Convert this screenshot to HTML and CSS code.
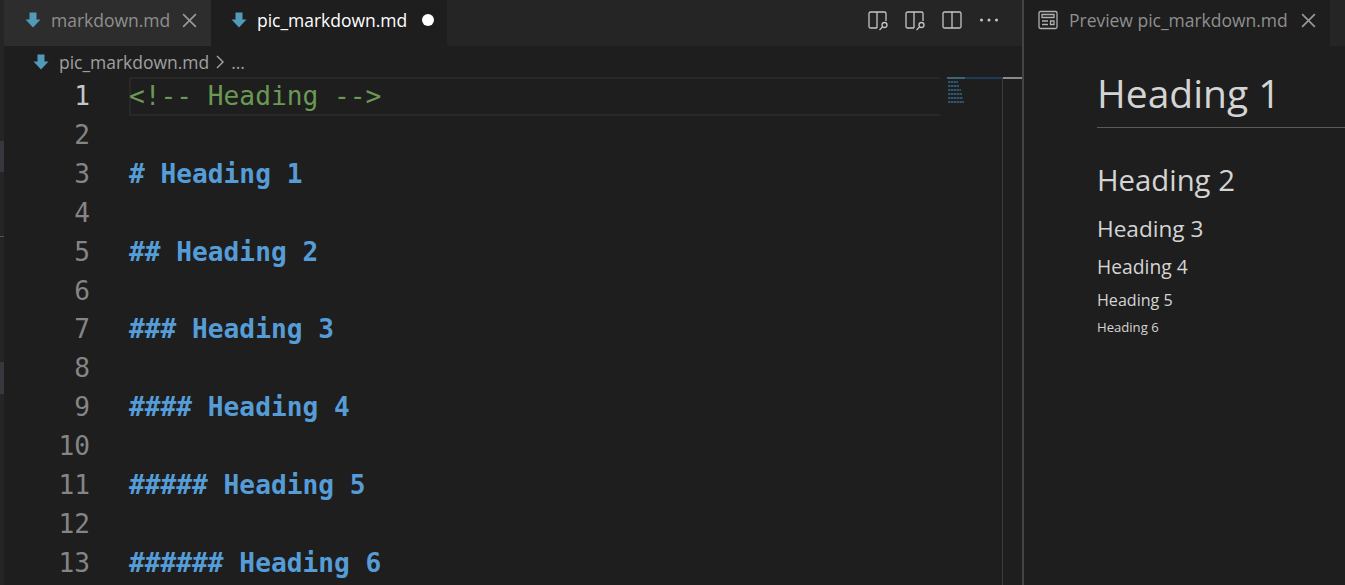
FILE: index.html
```html
<!DOCTYPE html>
<html lang="en">
<head>
<meta charset="utf-8">
<title>pic_markdown.md</title>
<link rel="stylesheet" href="styles.css">
</head>
<body>
<div class="window">
  <div class="strip"><i class="strip-a"></i><i class="strip-b"></i><i class="strip-c"></i></div>
  <main class="group">
    <div class="tabbar">
      <div class="tab tab-inactive">
        <svg class="md-icon" viewBox="0 0 16 16"><path d="M4.500.5h7v7h4L8 15.500.5 7.500h4z"/></svg>
        <span class="tab-name">markdown.md</span>
        <svg class="close" viewBox="0 0 16 16"><path d="M2 2l12 12M14 2L2 14"/></svg>
      </div>
      <div class="tab tab-active">
        <svg class="md-icon" viewBox="0 0 16 16"><path d="M4.500.5h7v7h4L8 15.500.5 7.500h4z"/></svg>
        <span class="tab-name">pic_markdown.md</span>
        <span class="dirty"></span>
      </div>
      <div class="actions">
        <svg class="action" viewBox="0 0 22 22"><path d="M10 19H3.500a1.500 1.500 0 0 1-1.500-1.500v-13A1.500 1.500 0 0 1 3.500 3h14A1.500 1.500 0 0 1 19 4.500V12M10 3v16"/><circle cx="17.500" cy="16" r="2.500"/><path d="M15.500 18l-3 3"/></svg>
        <svg class="action" viewBox="0 0 22 22"><path d="M10 19H3.500a1.500 1.500 0 0 1-1.500-1.500v-13A1.500 1.500 0 0 1 3.500 3h14A1.500 1.500 0 0 1 19 4.500V12M10 3v16"/><circle cx="17.500" cy="16" r="2.500"/><path d="M15.500 18l-3 3"/></svg>
        <svg class="action" viewBox="0 0 22 22"><path d="M3.500 3h15A1.500 1.500 0 0 1 20 4.500v13a1.500 1.500 0 0 1-1.500 1.500h-15A1.500 1.500 0 0 1 2 17.500v-13A1.500 1.500 0 0 1 3.500 3zM11 3v16"/></svg>
        <svg class="action action-more" viewBox="0 0 22 22"><circle cx="3.500" cy="11" r="1.500"/><circle cx="11" cy="11" r="1.500"/><circle cx="18.500" cy="11" r="1.500"/></svg>
      </div>
    </div>
    <div class="crumbs">
      <svg class="md-icon" viewBox="0 0 16 16"><path d="M4.500.5h7v7h4L8 15.500.5 7.500h4z"/></svg>
      <span>pic_markdown.md</span>
      <svg class="chev" viewBox="0 0 10 16"><path d="M2 2l6 6-6 6"/></svg>
      <span>...</span>
    </div>
    <div class="editor">
      <div class="gutter">
        <div class="ln ln-cur">1</div><div class="ln">2</div><div class="ln">3</div><div class="ln">4</div><div class="ln">5</div><div class="ln">6</div><div class="ln">7</div><div class="ln">8</div><div class="ln">9</div><div class="ln">10</div><div class="ln">11</div><div class="ln">12</div><div class="ln">13</div>
      </div>
      <div class="code">
        <div class="line line-cur comment">&lt;!-- Heading --&gt;</div>
        <div class="line"></div>
        <div class="line head"># Heading 1</div>
        <div class="line"></div>
        <div class="line head">## Heading 2</div>
        <div class="line"></div>
        <div class="line head">### Heading 3</div>
        <div class="line"></div>
        <div class="line head">#### Heading 4</div>
        <div class="line"></div>
        <div class="line head">##### Heading 5</div>
        <div class="line"></div>
        <div class="line head">###### Heading 6</div>
      </div>
      <div class="minimap">
        <div class="mini-top"><i class="mini-green"></i></div>
        <i class="mini w1"></i><i class="mini w2"></i><i class="mini w3"></i><i class="mini w4"></i><i class="mini w5"></i><i class="mini w6"></i>
      </div>
      <div class="ruler"><i class="ruler-mark"></i></div>
    </div>
  </main>
  <div class="sash"></div>
  <aside class="preview">
    <div class="pv-tabbar">
      <div class="pv-tab">
        <svg class="pv-icon" viewBox="0 0 20 20"><rect x="1" y="1.500" width="18" height="17" rx="1.500"/><path d="M4 4.500h12v3H4zM4 11h6M4 14.500h6M12.500 11h3.500v3.500h-3.500z"/></svg>
        <span class="tab-name">Preview pic_markdown.md</span>
        <svg class="close" viewBox="0 0 16 16"><path d="M2 2l12 12M14 2L2 14"/></svg>
      </div>
    </div>
    <article class="doc">
      <h1>Heading 1</h1>
      <h2>Heading 2</h2>
      <h3>Heading 3</h3>
      <h4>Heading 4</h4>
      <h5>Heading 5</h5>
      <h6>Heading 6</h6>
    </article>
  </aside>
</div>
</body>
</html>
```
FILE: styles.css
```css
* { box-sizing: border-box; }
html, body { margin: 0; height: 100%; overflow: hidden; background: #1e1e1e; }
body { font-family: "Open Sans", "Noto Sans", sans-serif; }
.window { display: flex; height: 585px; width: 1345px; overflow: hidden; }

.strip { width: 4px; flex: none; background: #252526; padding-top: 141px; display: flex; flex-direction: column; }
.strip i { display: block; flex: none; }
.strip-a { height: 31px; background: #37373d; }
.strip-b { height: 1px; margin-top: 64px; background: #555; }
.strip-c { height: 32px; margin-top: 125px; background: #37373d; }

.group { width: 1018px; flex: none; display: flex; flex-direction: column; }
.tabbar { height: 46px; flex: none; background: #252526; display: flex; align-items: stretch; }
.tab { display: flex; align-items: center; font-size: 17.500px; padding-bottom: 6px; }
.tab-inactive { width: 207px; background: #2d2d2d; color: #8f8f8f; padding-left: 21px; }
.tab-active { width: 236px; background: #1e1e1e; color: #fff; padding-left: 20px; }
.tab-name { white-space: nowrap; letter-spacing: -0.02px; }
.md-icon { width: 16px; height: 16px; flex: none; fill: #519aba; margin-right: 10px; }
.close { width: 17px; height: 17px; flex: none; fill: none; stroke: #9a9a9a; stroke-width: 1.500; margin-left: 11px; }
.dirty { width: 12px; height: 12px; border-radius: 50%; background: #fff; margin-left: 15px; }

.actions { margin-left: auto; padding: 0 22px 6px 0; display: flex; align-items: center; gap: 15px; }
.action { width: 22px; height: 22px; flex: none; fill: none; stroke: #c5c5c5; stroke-width: 1.300; }
.action-more { fill: #c5c5c5; stroke: none; }

.crumbs { height: 31px; flex: none; display: flex; align-items: center; padding-left: 29px; color: #a0a0a0; font-size: 17.500px; letter-spacing: -0.02px; }
.crumbs .md-icon { margin-right: 10px; }
.chev { width: 10px; height: 16px; flex: none; fill: none; stroke: #a8a8a8; stroke-width: 1.400; margin: 0 6px; }

.editor { flex: 1; display: flex; min-height: 0; font-family: "DejaVu Sans Mono", "Liberation Mono", monospace; font-size: 26.200px; }
.gutter { width: 125px; flex: none; }
.ln { height: 38.920px; line-height: 38px; padding-right: 39px; text-align: right; color: #858585; }
.ln-cur { color: #c6c6c6; }
.code { width: 811px; flex: none; }
.line { height: 38.920px; line-height: 38px; white-space: pre; }
.line-cur { box-shadow: inset 2px 2px 0 #282828, inset 0 -2px 0 #282828; }
.comment { color: #6a9955; }
.head { color: #569cd6; font-weight: 700; }

.minimap { width: 62px; flex: none; padding-left: 7px; display: flex; flex-direction: column; }
.mini-top { height: 2px; background: #1d3a58; margin-bottom: 2px; flex: none; }
.mini-green { display: block; width: 18px; height: 2px; background: #3d6670; }
.mini { display: block; height: 2px; margin: 0 0 2px 1px; flex: none; background: repeating-linear-gradient(90deg, #30556f 0 2px, #243c4e 2px 3px); }
.w1 { width: 10px; } .w2 { width: 11px; } .w3 { width: 13px; } .w4 { width: 14px; } .w5 { width: 15px; } .w6 { width: 16px; }

.ruler { width: 20px; flex: none; border-left: 1px solid #3a3a3a; }
.ruler-mark { display: block; height: 2px; background: #8a8a8a; }

.sash { width: 2px; flex: none; background: #444; }

.preview { flex: 1; min-width: 0; display: flex; flex-direction: column; }
.pv-tabbar { height: 46px; flex: none; background: #252526; display: flex; }
.pv-tab { width: 306px; background: #1e1e1e; display: flex; align-items: center; padding: 0 0 6px 14px; color: #8f8f8f; font-size: 17.500px; }
.pv-icon { width: 20px; height: 20px; flex: none; fill: none; stroke: #b0b0b0; stroke-width: 1.300; margin-right: 11px; }
.pv-tab .close { margin-left: 12px; }

.doc { flex: 1; padding: 0 0 0 73px; color: #d4d4d4; font-weight: 400; }
.doc h1, .doc h2, .doc h3, .doc h4, .doc h5, .doc h6 { margin: 0; font-weight: 400; white-space: nowrap; }
.doc h1 { font-size: 39px; line-height: 50px; height: 60px; margin-top: 22px; border-bottom: 1px solid #5a5a5a; }
.doc h2 { font-size: 29.300px; line-height: 38px; margin-top: 33px; }
.doc h3 { font-size: 22.600px; line-height: 30px; margin-top: 15px; }
.doc h4 { font-size: 19.300px; line-height: 26px; margin-top: 10px; }
.doc h5 { font-size: 16.100px; line-height: 22px; margin-top: 9px; }
.doc h6 { font-size: 13.100px; line-height: 18px; margin-top: 7px; }
```
